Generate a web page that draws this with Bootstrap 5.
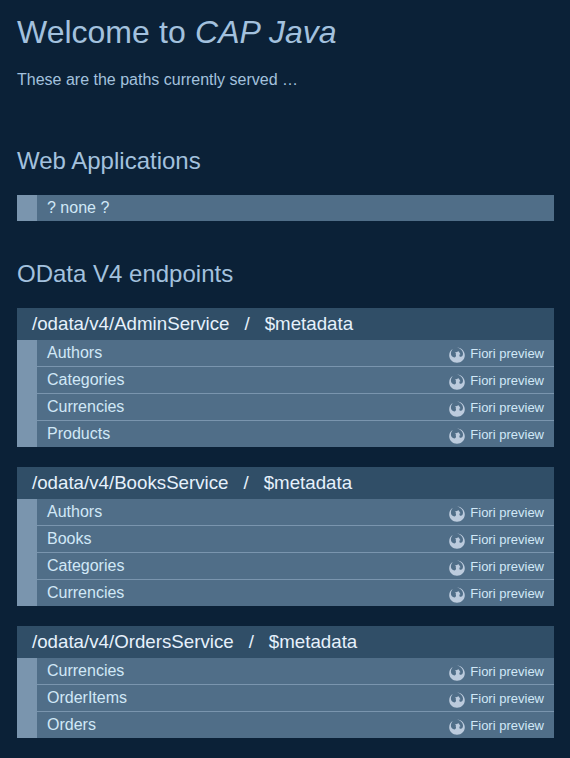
<!DOCTYPE html>
<html lang="en">
<head>
<meta charset="utf-8">
<meta name="viewport" content="width=device-width, initial-scale=1">
<title>Welcome to CAP Java</title>
<link href="https://cdn.jsdelivr.net/npm/bootstrap@5.3.0/dist/css/bootstrap.min.css" rel="stylesheet">
<style>
body { background: #0b2137; color: #a3c1de; font-family: "Liberation Sans", Arial, sans-serif; font-size: 16px; overflow: hidden; }
a { text-decoration: none; }
main { padding: 13px 16px 20px 17px; }
h1 { font-size: 32px; line-height: 38px; font-weight: 400; margin: 0 0 20px; word-spacing: .4px; }
h2 { font-size: 24px; line-height: 28px; font-weight: 400; margin: 0 0 20px; }
.intro { line-height: 18px; margin: 0 0 58px; }
.service-title { background: #304e67; color: #e6f1fc; font-size: 18.72px; line-height: 32px; height: 32px; padding-left: 15px; margin: 0; font-weight: 400; white-space: pre; word-spacing: -.2px; }
.service-title a { color: inherit; }
.service + .service { margin-top: 20px; }
.entities { border-left: 20px solid #7a95ae; background: #506e88; }
.web-apps { margin-bottom: 39px; }
.entity { height: 26px; box-sizing: content-box; color: #d1e8f7; line-height: 25px; padding: 0 10px; }
.entity + .entity { border-top: 1px solid #7a95ae; }
.entity a { color: inherit; }
.preview { font-size: 13px; line-height: 27px; }
.preview svg { width: 16px; height: 16px; margin: 7px 5px 0 0; }
</style>
<script src="https://cdn.jsdelivr.net/npm/bootstrap@5.3.0/dist/js/bootstrap.bundle.min.js"></script>
</head>
<body>
<svg class="d-none" xmlns="http://www.w3.org/2000/svg">
  <symbol id="fiori" viewBox="0 0 16 16">
    <path fill="#bccbdd" d="M3.800 2.100C1.500 3.300 0.200 5.500 0.200 8.300C0.200 12.600 3.600 15.800 8 15.800C12.400 15.800 15.800 12.600 15.800 8.300C15.800 4.200 12.800 0.900 8 0.200C11.900 1.900 14 3.900 14 6.500C14 8.600 13 9.900 11.700 9.800C10.500 9.700 10.200 8.700 10.500 7.400L11.500 7.300L9.600 4.300L5.800 5.800L7.100 6.500C6.100 7.400 7.600 8.500 6.800 9.600C5.900 10.800 4.300 10.600 3.200 9.600C1.400 7.900 1.500 4.500 3.800 2.100Z"/>
  </symbol>
</svg>
<main>
  <h1>Welcome to <i>CAP Java</i></h1>
  <p class="intro">These are the paths currently served …</p>

  <h2>Web Applications</h2>
  <div class="entities web-apps"><div class="entity">? none ?</div></div>

  <h2>OData V4 endpoints</h2>

  <section class="service">
    <h3 class="service-title"><a href="#">/odata/v4/AdminService</a>&nbsp;&nbsp; / &nbsp;&nbsp;<a href="#">$metadata</a></h3>
    <div class="entities">
      <div class="entity d-flex justify-content-between"><a href="#">Authors</a><a class="preview d-flex" href="#"><svg><use href="#fiori"/></svg>Fiori preview</a></div>
      <div class="entity d-flex justify-content-between"><a href="#">Categories</a><a class="preview d-flex" href="#"><svg><use href="#fiori"/></svg>Fiori preview</a></div>
      <div class="entity d-flex justify-content-between"><a href="#">Currencies</a><a class="preview d-flex" href="#"><svg><use href="#fiori"/></svg>Fiori preview</a></div>
      <div class="entity d-flex justify-content-between"><a href="#">Products</a><a class="preview d-flex" href="#"><svg><use href="#fiori"/></svg>Fiori preview</a></div>
    </div>
  </section>

  <section class="service">
    <h3 class="service-title"><a href="#">/odata/v4/BooksService</a>&nbsp;&nbsp; / &nbsp;&nbsp;<a href="#">$metadata</a></h3>
    <div class="entities">
      <div class="entity d-flex justify-content-between"><a href="#">Authors</a><a class="preview d-flex" href="#"><svg><use href="#fiori"/></svg>Fiori preview</a></div>
      <div class="entity d-flex justify-content-between"><a href="#">Books</a><a class="preview d-flex" href="#"><svg><use href="#fiori"/></svg>Fiori preview</a></div>
      <div class="entity d-flex justify-content-between"><a href="#">Categories</a><a class="preview d-flex" href="#"><svg><use href="#fiori"/></svg>Fiori preview</a></div>
      <div class="entity d-flex justify-content-between"><a href="#">Currencies</a><a class="preview d-flex" href="#"><svg><use href="#fiori"/></svg>Fiori preview</a></div>
    </div>
  </section>

  <section class="service">
    <h3 class="service-title"><a href="#">/odata/v4/OrdersService</a>&nbsp;&nbsp; / &nbsp;&nbsp;<a href="#">$metadata</a></h3>
    <div class="entities">
      <div class="entity d-flex justify-content-between"><a href="#">Currencies</a><a class="preview d-flex" href="#"><svg><use href="#fiori"/></svg>Fiori preview</a></div>
      <div class="entity d-flex justify-content-between"><a href="#">OrderItems</a><a class="preview d-flex" href="#"><svg><use href="#fiori"/></svg>Fiori preview</a></div>
      <div class="entity d-flex justify-content-between"><a href="#">Orders</a><a class="preview d-flex" href="#"><svg><use href="#fiori"/></svg>Fiori preview</a></div>
    </div>
  </section>
</main>
</body>
</html>
